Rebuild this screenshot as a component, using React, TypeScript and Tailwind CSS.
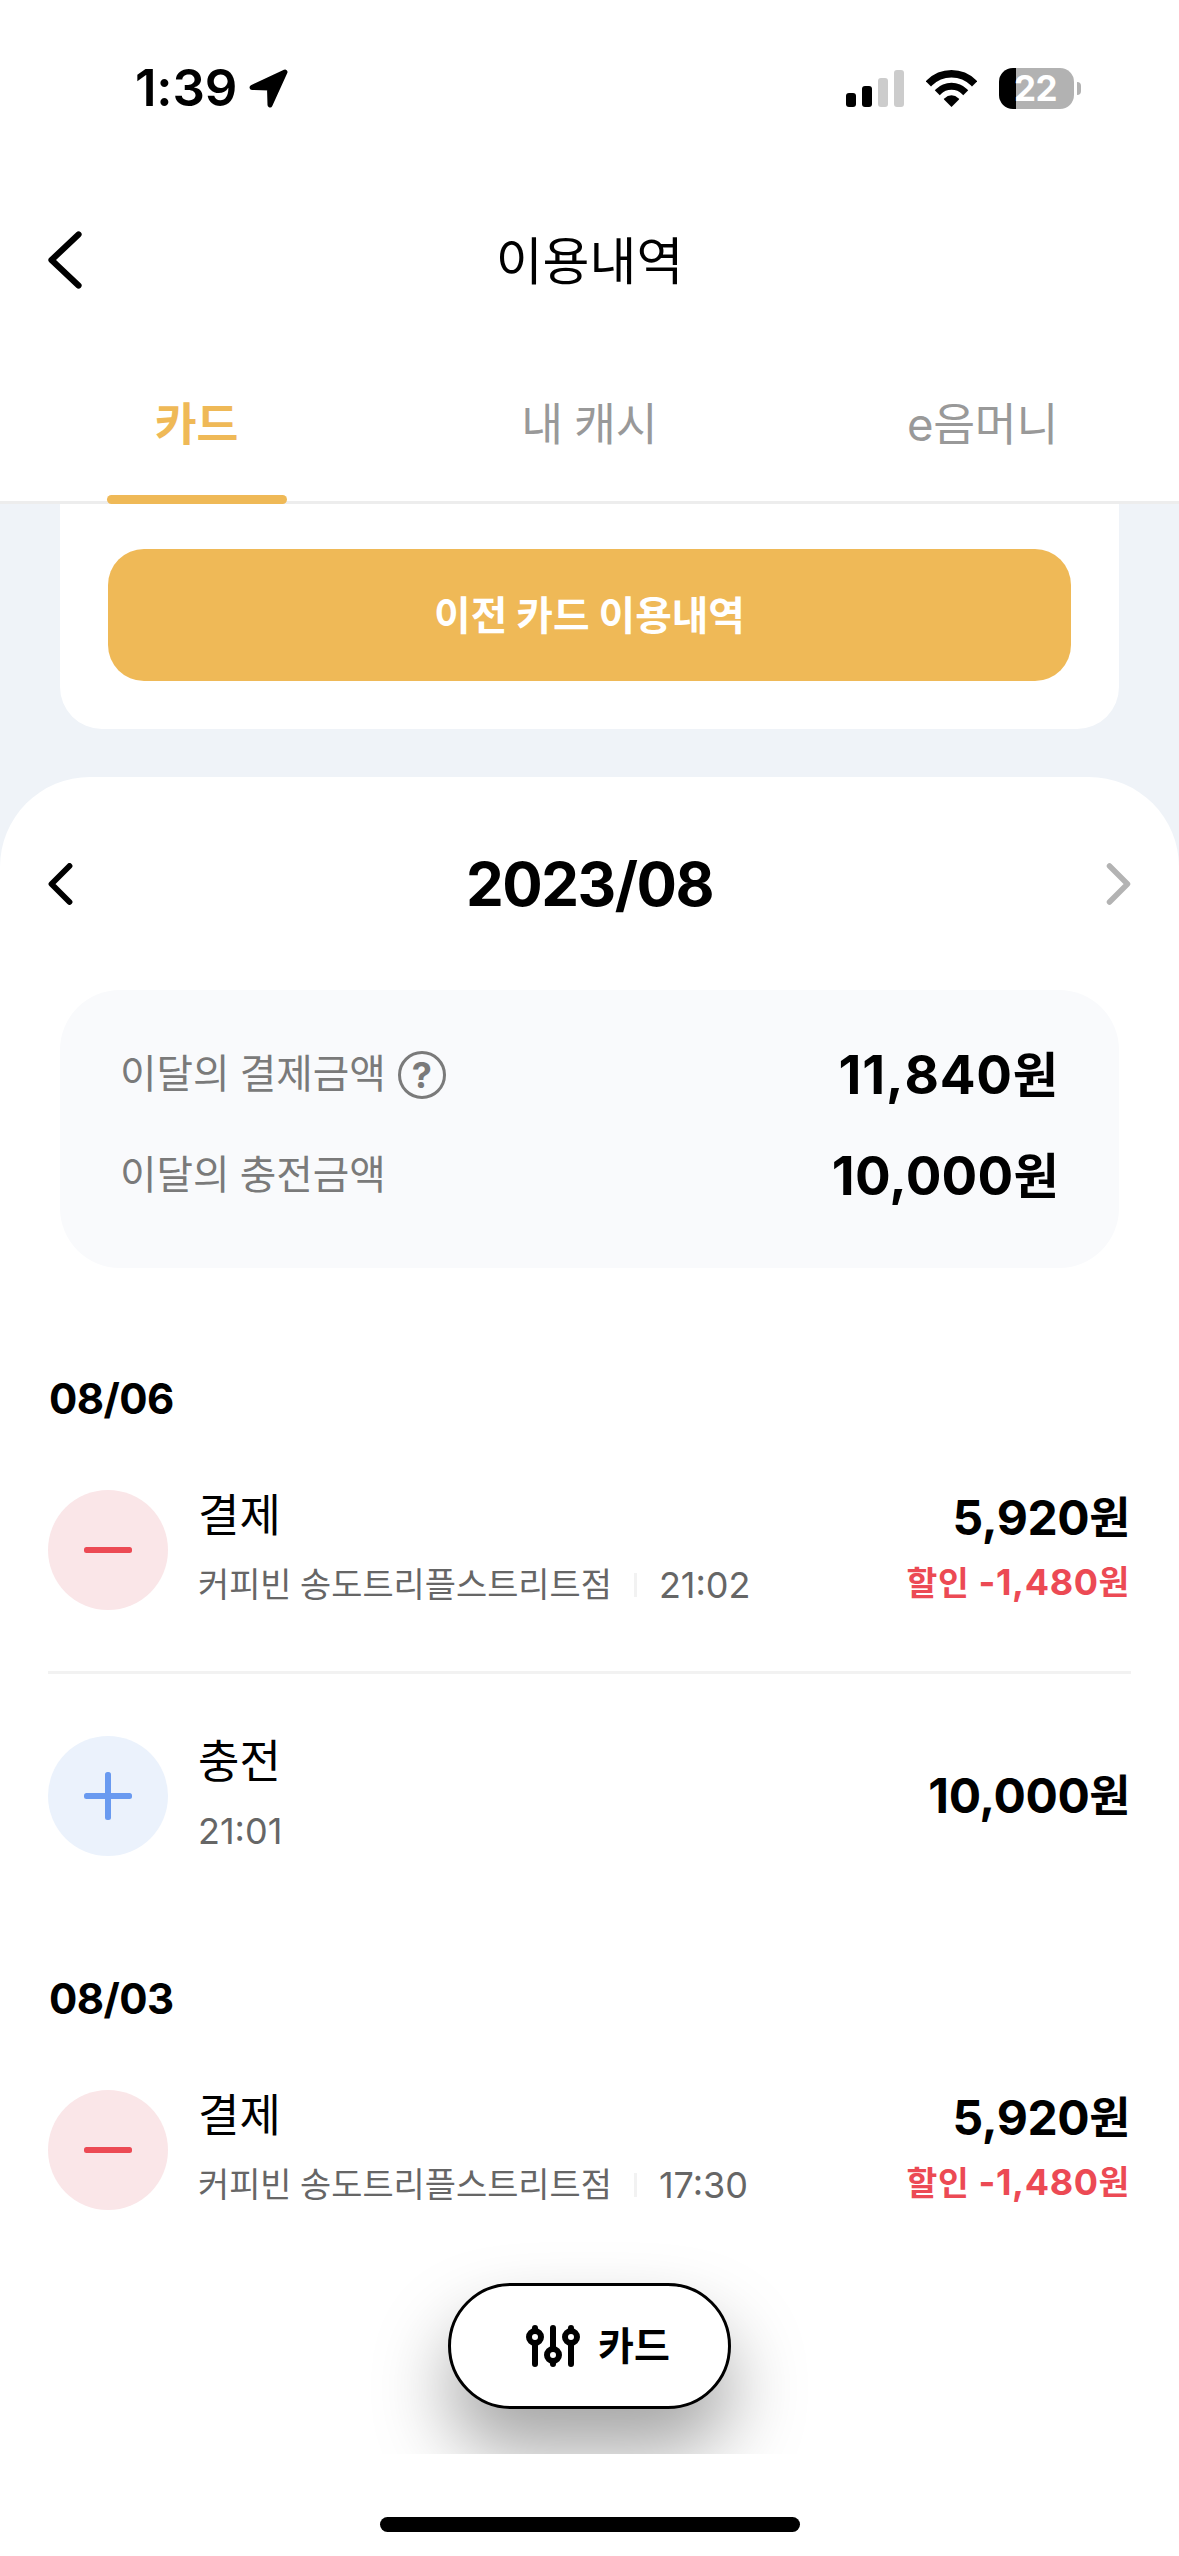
import React from 'react';

interface Transaction {
  id: string;
  type: 'payment' | 'charge';
  title: string;
  merchant?: string;
  time: string;
  amount: string;
  discount?: string;
}

interface DayGroup {
  date: string;
  items: Transaction[];
}

const days: DayGroup[] = [
  {
    date: '08/06',
    items: [
      {
        id: '1',
        type: 'payment',
        title: '결제',
        merchant: '커피빈 송도트리플스트리트점',
        time: '21:02',
        amount: '5,920',
        discount: '-1,480'
      },
      { id: '2', type: 'charge', title: '충전', time: '21:01', amount: '10,000' }
    ]
  },
  {
    date: '08/03',
    items: [
      {
        id: '3',
        type: 'payment',
        title: '결제',
        merchant: '커피빈 송도트리플스트리트점',
        time: '17:30',
        amount: '5,920',
        discount: '-1,480'
      }
    ]
  }
];

function StatusBar() {
  return (
    <div className="flex h-[176px] items-center pl-[135px] pr-[98px] text-black">
      <span className="w-[112px] text-[51px] leading-[60px] font-semibold tracking-[-0.2px]">1:39</span>
      <svg className="h-[42px] w-[42px]" viewBox="0 0 42 42">
        <path
          d="M5 20.5 L38 5 L23 38 L22.5 21 Z"
          fill="black"
          stroke="black"
          strokeWidth="5"
          strokeLinejoin="round"
        />
      </svg>

      <svg className="ml-auto h-[37px] w-[58px]" viewBox="0 0 58 37">
        <rect x="0" y="23" width="10" height="14" rx="3" />
        <rect x="16" y="16" width="10" height="21" rx="3" />
        <rect x="32" y="8" width="10" height="29" rx="3" fill="#cccccc" />
        <rect x="48" y="0" width="10" height="37" rx="3" fill="#cccccc" />
      </svg>
      <svg className="ml-[22px] h-[37px] w-[51px]" viewBox="0 0 51 37">
        <clipPath id="wedge">
          <path d="M25.5 37 L-1.5 10 L-1.5 -2 L52.5 -2 L52.5 10 Z" />
        </clipPath>
        <g clipPath="url(#wedge)">
          <circle cx="25.5" cy="35" r="31.3" fill="none" stroke="black" strokeWidth="7.4" />
          <circle cx="25.5" cy="35" r="18.7" fill="none" stroke="black" strokeWidth="7" />
          <circle cx="25.5" cy="35" r="9.7" />
        </g>
      </svg>
      <div className="ml-[22px] flex h-[41px] w-[75px] items-center justify-center rounded-[14px] bg-[linear-gradient(90deg,#000_17px,#b2b2b2_17px)] pr-[2px] text-[35px] leading-[41px] font-bold tracking-[-0.5px] text-white">
        22
      </div>
      <div className="ml-[3px] h-[13px] w-[4px] rounded-r-full bg-[#b2b2b2]" />
    </div>
  );
}

function Won({ value, className }: { value: string; className: string }) {
  return (
    <span className={className}>
      {value}
      <span className="align-[0.03em] text-[0.93em] leading-none">원</span>
    </span>
  );
}

function TransactionRow({ item }: { item: Transaction }) {
  const isPayment = item.type === 'payment';

  return (
    <div className="flex h-[120px] items-center">
      <div
        className={`flex h-[120px] w-[120px] items-center justify-center rounded-full ${
          isPayment ? 'bg-[#fae6e8]' : 'bg-[#ebf2fc]'
        }`}
      >
        <svg className="h-[48px] w-[48px]" viewBox="0 0 48 48">
          <rect x="0" y="21" width="48" height="6" rx="2.5" fill={isPayment ? '#ec4a54' : '#699af0'} />
          {!isPayment && <rect x="21" y="0" width="6" height="48" rx="2.5" fill="#699af0" />}
        </svg>
      </div>
      <div className="ml-[30px] flex flex-col">
        <span className="h-[69px] text-[45px] leading-[49px]">{item.title}</span>
        <div className="flex h-[50px] items-center text-[#666666]">
          {item.merchant && (
            <>
              <span className="text-[33.9px] leading-[50px] [word-spacing:-1px]">{item.merchant}</span>
              <span className="mr-[22px] ml-[22px] h-[24px] w-[3px] bg-[#f2f2f2]" />
            </>
          )}
          <span className="text-[36px] leading-[50px]">{item.time}</span>
        </div>
      </div>
      <div className="ml-auto flex flex-col items-end pr-px font-bold">
        <Won className="text-[48px] leading-[60px] tracking-[-0.4px] text-black" value={item.amount} />
        {item.discount && (
          <span className="mt-[5px] text-[36px] leading-[58px] tracking-[0.6px] text-[#ec4a54]">
            <span className="text-[0.93em]">할인</span> <Won className="" value={item.discount} />
          </span>
        )}
      </div>
    </div>
  );
}

export default function App() {
  return (
    <main className="relative flex h-[2556px] w-[1179px] flex-col overflow-hidden bg-white font-['Inter','Noto_Sans_CJK_KR',sans-serif] text-black">
      <StatusBar />

      {/* Header */}
      <header className="flex h-[168px] items-center justify-between px-[48px]">
        <svg className="h-[58px] w-[34px]" viewBox="0 0 34 58" fill="none">
          <path d="M30.5 3.5 L3.5 29 L30.5 54.5" stroke="black" strokeWidth="6.2" strokeLinecap="round" strokeLinejoin="round" />
        </svg>
        <h1 className="pt-[3px] text-[51px] leading-[60px]">이용내역</h1>
        <div className="w-[34px]" />
      </header>

      {/* Tabs */}
      <nav className="grid h-[160px] grid-cols-3 border-b-[3px] border-[#ededed] text-[45.5px] leading-[161px] text-[#999999]">
        <div className="relative h-[157px] text-center font-semibold text-[#efb957]">
          카드
          <span className="absolute -bottom-[3px] left-[107px] h-[9px] w-[180px] rounded-full bg-[#efb957]" />
        </div>
        <div className="h-[157px] text-center [word-spacing:-2px]">내 캐시</div>
        <div className="h-[157px] text-center tracking-[-0.3px]">e음머니</div>
      </nav>

      <div className="relative flex h-[1950px] flex-col overflow-hidden bg-[#eff3f8]">
        <section className="mx-[60px] h-[225px] rounded-b-[42px] bg-white px-[48px] pt-[45px]">
          <button className="h-[132px] w-full rounded-[36px] bg-[#efb957] pt-[2px] text-[39.8px] font-semibold text-white [word-spacing:-1px]">
            이전 카드 이용내역
          </button>
        </section>

        <section className="mt-[48px] flex-1 rounded-t-[90px] bg-white px-[48px]">
          {/* Month picker */}
          <div className="flex h-[213px] items-center justify-between">
            <svg className="h-[42px] w-[25px]" viewBox="0 0 25 42" fill="none">
              <path d="M21.5 3 L3.5 21 L21.5 39" stroke="black" strokeWidth="5.8" strokeLinecap="round" strokeLinejoin="round" />
            </svg>
            <h2 className="text-[60px] leading-[72px] font-bold tracking-[-1.5px]">2023/08</h2>
            <svg className="h-[42px] w-[25px]" viewBox="0 0 25 42" fill="none">
              <path d="M3.5 3 L21.5 21 L3.5 39" stroke="#b3b3b3" strokeWidth="5.5" strokeLinecap="round" strokeLinejoin="round" />
            </svg>
          </div>

          {/* Monthly summary */}
          <div className="mx-[12px] h-[278px] rounded-[60px] bg-[#f9fafc] px-[60px] pt-[34px]">
            <div className="flex h-[101px] items-center">
              <span className="text-[39.7px] text-[#7a7a7a] [word-spacing:-1px]">이달의 결제금액</span>
              <span className="ml-[12px] flex h-[48px] w-[48px] items-center justify-center rounded-full border-[3px] border-[#7a7a7a] text-[36px] leading-[42px] font-bold text-[#7a7a7a]">
                ?
              </span>
              <Won className="ml-auto text-[53px] leading-[60px] font-bold tracking-[0.8px] [font-kerning:none]" value="11,840" />
            </div>
            <div className="flex h-[101px] items-center">
              <span className="text-[39.7px] text-[#7a7a7a] [word-spacing:-1px]">이달의 충전금액</span>
              <Won className="ml-auto text-[53px] leading-[60px] font-bold tracking-[0.2px]" value="10,000" />
            </div>
          </div>

          {/* Transactions by day */}
          {days.map((day) => (
            <div key={day.date} className="pt-[101px] not-last:pb-[12px]">
              <h3 className="h-[121px] pl-px text-[42px] leading-[60px] font-bold tracking-[-0.6px]">{day.date}</h3>
              <div className="flex flex-col">
                {day.items.map((item, index) => (
                  <React.Fragment key={item.id}>
                    {index > 0 && <div className="mt-[61px] mb-[62px] h-[3px] bg-[#f2f2f2]" />}
                    <TransactionRow item={item} />
                  </React.Fragment>
                ))}
              </div>
            </div>
          ))}
        </section>

        {/* Floating filter */}
        <button className="absolute top-[1779px] left-[448px] flex h-[126px] w-[283px] items-center rounded-full border-[3px] border-black bg-white pl-[75px] shadow-[0_42px_76px_rgba(0,0,0,0.36)]">
          <svg className="h-[42px] w-[54px]" viewBox="0 0 54 42" fill="none" stroke="black" strokeWidth="6" strokeLinecap="round">
            <path d="M9 3 V39 M27 3 V39 M45 3 V39" />
            <circle cx="9" cy="12" r="6" fill="white" />
            <circle cx="27" cy="30" r="6" fill="white" />
            <circle cx="45" cy="12" r="6" fill="white" />
          </svg>
          <span className="ml-[18px] text-[39px] leading-[60px] font-semibold">카드</span>
        </button>
      </div>

      {/* Home indicator */}
      <div className="flex flex-1 justify-center pt-[63px]">
        <div className="h-[15px] w-[420px] rounded-full bg-black" />
      </div>
    </main>
  );
}
